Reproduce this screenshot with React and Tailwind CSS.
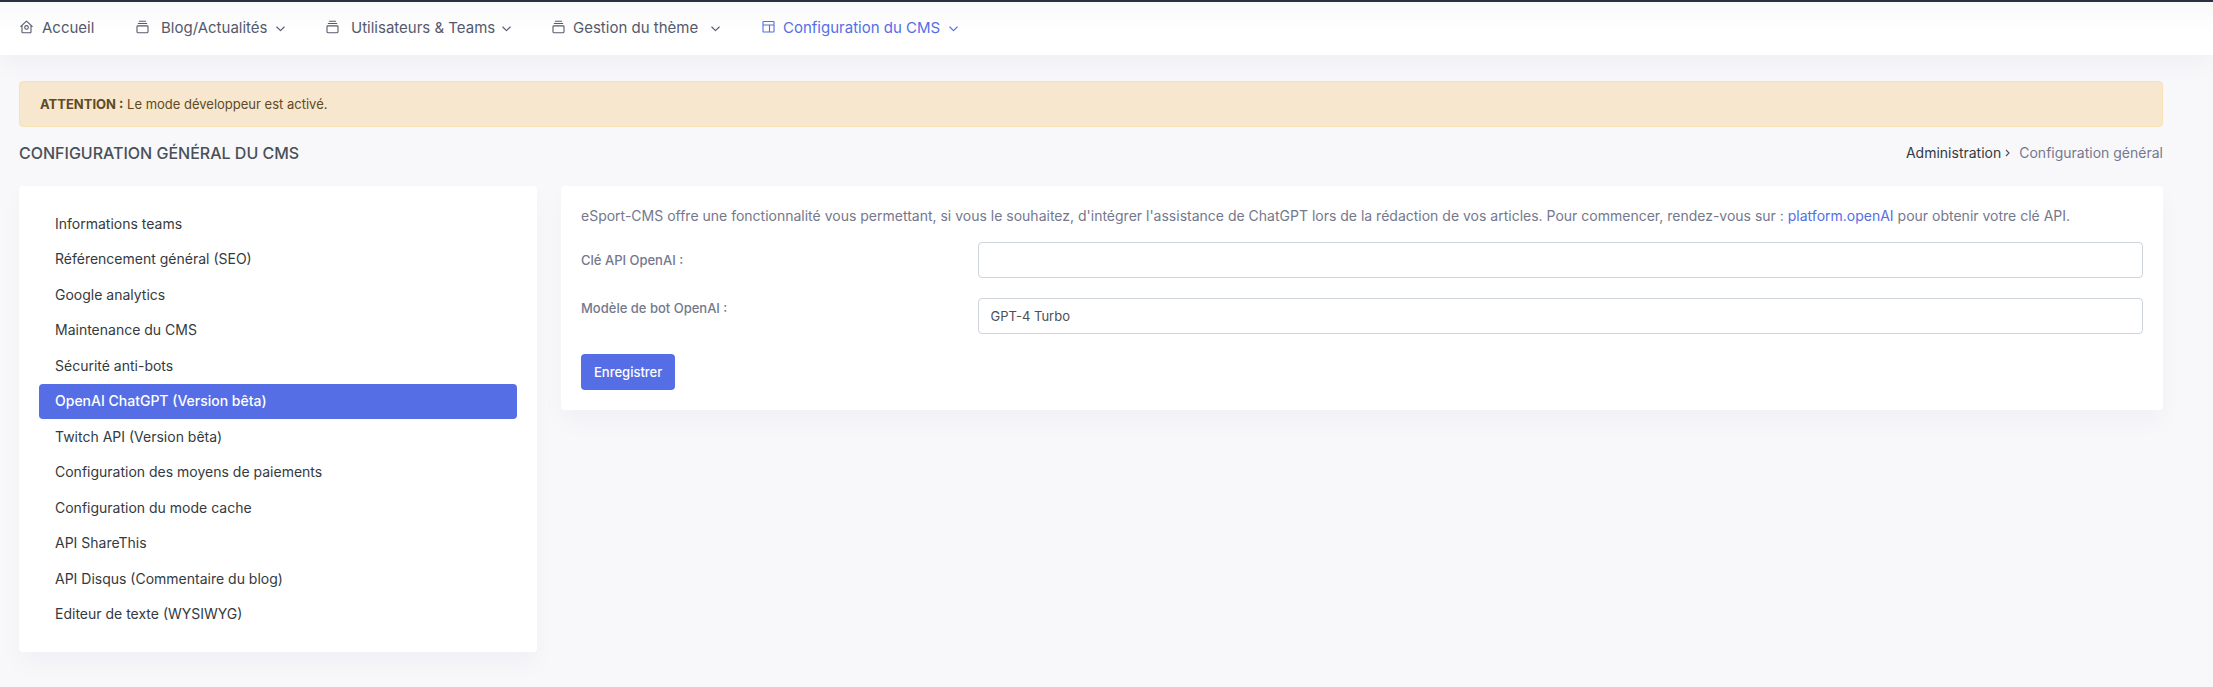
const HomeIcon = () => (
  <svg viewBox="0 0 13 14" className="mb-0.5 h-3.5 w-[13px] shrink-0" fill="none" stroke="currentColor" strokeWidth="1.1" strokeLinejoin="round" strokeLinecap="round" aria-hidden="true">
    <path d="M.8 6.4 6.5 1.2l5.7 5.2M2 5.6V12a.7.7 0 0 0 .7.7h7.6a.7.7 0 0 0 .7-.7V5.6" />
    <circle cx="6.5" cy="7.4" r="1.8" />
  </svg>
);

const StackIcon = () => (
  <svg viewBox="0 0 13 14" className="mb-0.5 h-3.5 w-[13px] shrink-0" fill="none" stroke="currentColor" strokeWidth="1.1" strokeLinecap="round" aria-hidden="true">
    <path d="M3.4 1.2h6.2M2.3 3.5h8.4" />
    <rect x="1" y="5.9" width="11" height="6.8" rx=".9" />
  </svg>
);

const LayoutIcon = () => (
  <svg viewBox="0 0 13 14" className="mb-0.5 h-3.5 w-[13px] shrink-0" fill="none" stroke="currentColor" strokeWidth="1.1" strokeLinejoin="round" aria-hidden="true">
    <rect x="1" y="1.5" width="11" height="10.5" rx=".6" />
    <path d="M1 5h11M7.5 5v7" />
  </svg>
);

const Chevron = () => (
  <svg viewBox="0 0 9 6" className="mt-0.5 h-1.5 w-[9px] shrink-0" fill="none" stroke="currentColor" strokeWidth="1.1" strokeLinecap="round" strokeLinejoin="round" aria-hidden="true">
    <path d="m.8 1 3.7 3.7L8.2 1" />
  </svg>
);

const menu = [
  { label: "Blog/Actualités", Icon: StackIcon, item: "w-[190px]", gap: "ml-3", text: "w-[115px]" },
  { label: "Utilisateurs & Teams", Icon: StackIcon, item: "w-[226px]", gap: "ml-3", text: "w-[151px]" },
  { label: "Gestion du thème", Icon: StackIcon, item: "w-[210px]", gap: "ml-2", text: "w-[138px]" },
  { label: "Configuration du CMS", Icon: LayoutIcon, item: "w-[200px]", gap: "ml-2", text: "w-[166px]", active: true },
];

const sections = [
  "Informations teams",
  "Référencement général (SEO)",
  "Google analytics",
  "Maintenance du CMS",
  "Sécurité anti-bots",
  "OpenAI ChatGPT (Version bêta)",
  "Twitch API (Version bêta)",
  "Configuration des moyens de paiements",
  "Configuration du mode cache",
  "API ShareThis",
  "API Disqus (Commentaire du blog)",
  "Editeur de texte (WYSIWYG)",
];

const current = "OpenAI ChatGPT (Version bêta)";

export default function App() {
  return (
    <div className="min-h-screen bg-[#f8f8fb] font-['Inter',sans-serif] text-[13px] leading-5 text-[#495057]">
      <header className="border-t-2 border-[#2a3042] shadow-[0_12px_24px_rgba(18,38,63,0.03)]">
        <nav className="flex h-[53px] items-center bg-linear-to-b from-[#f9f9fa] to-white to-60% pb-0.5 pl-5 text-[15px] whitespace-nowrap text-[#545a6d]">
          <a href="#accueil" className="flex w-[116px] items-center gap-[9px]">
            <HomeIcon />
            <span>Accueil</span>
          </a>
          {menu.map(({ label, Icon, item, gap, text, active }) => (
            <div key={label} className={item}>
              <button type="button" className={active ? "flex items-center text-[#556ee6]" : "flex items-center"}>
                <Icon />
                <span className={`${gap} ${text} text-left`}>{label}</span>
                <Chevron />
              </button>
            </div>
          ))}
        </nav>
      </header>

      <main className="pt-[26px] pr-[50px] pb-[34px] pl-[19px]">
        <div role="alert" className="rounded border border-[#f8e1b5] bg-[#f6e7ce] px-5 py-3 text-[#5f4a23]">
          <strong className="font-bold">ATTENTION :</strong> Le mode développeur est activé.
        </div>

        <div className="flex h-[59px] items-center justify-between pb-2">
          <h1 className="text-base font-medium">CONFIGURATION GÉNÉRAL DU CMS</h1>
          <nav aria-label="Fil d'Ariane" className="flex items-center text-sm">
            <a href="#administration" className="text-[#343a40]">Administration</a>
            <svg viewBox="0 0 6 8" className="mr-2 ml-1 h-2 w-1.5" fill="none" stroke="#495057" strokeWidth="1.1" aria-hidden="true">
              <path d="m1 1 3 3-3 3" />
            </svg>
            <span className="text-[#74788d]">Configuration général</span>
          </nav>
        </div>

        <div className="grid grid-cols-4 items-start gap-6">
          <div className="rounded bg-white p-5 shadow-[0_12px_24px_rgba(18,38,63,0.03)]">
            <nav aria-label="Configuration" className="grid min-h-[426px] auto-rows-fr text-sm">
              {sections.map((label) => (
                <a
                  key={label}
                  href="#section"
                  className={
                    label === current
                      ? "flex items-center rounded bg-[#556ee6] px-4 font-medium text-white"
                      : "flex items-center rounded px-4 text-[#343a40]"
                  }
                >
                  {label}
                </a>
              ))}
            </nav>
          </div>

          <section className="col-span-3 rounded bg-white p-5 shadow-[0_12px_24px_rgba(18,38,63,0.03)]">
            <p className="mb-4 text-sm leading-5 text-[#74788d]">
              eSport-CMS offre une fonctionnalité vous permettant, si vous le souhaitez, d'intégrer l'assistance de ChatGPT lors de la rédaction de vos articles. Pour commencer, rendez-vous sur :{" "}
              <a href="#openai" className="text-[#556ee6]">platform.openAI</a> pour obtenir votre clé API.
            </p>
            <form className="flex flex-col gap-5" onSubmit={(e) => e.preventDefault()}>
              <div className="grid grid-cols-4 items-center gap-6">
                <label htmlFor="api-key" className="font-medium text-[#74788d]">Clé API OpenAI :</label>
                <input id="api-key" type="text" className="col-span-3 h-9 rounded border border-[#ced4da] bg-white px-3 outline-none" />
              </div>
              <div className="grid grid-cols-4 items-start gap-6">
                <label htmlFor="model" className="font-medium text-[#74788d]">Modèle de bot OpenAI :</label>
                <select id="model" className="col-span-3 h-9 appearance-none rounded border border-[#ced4da] bg-white px-3 text-[#495057] outline-none">
                  <option>GPT-4 Turbo</option>
                </select>
              </div>
              <button type="submit" className="h-9 self-start rounded bg-[#556ee6] px-[13px] font-medium text-white">Enregistrer</button>
            </form>
          </section>
        </div>
      </main>
    </div>
  );
}
